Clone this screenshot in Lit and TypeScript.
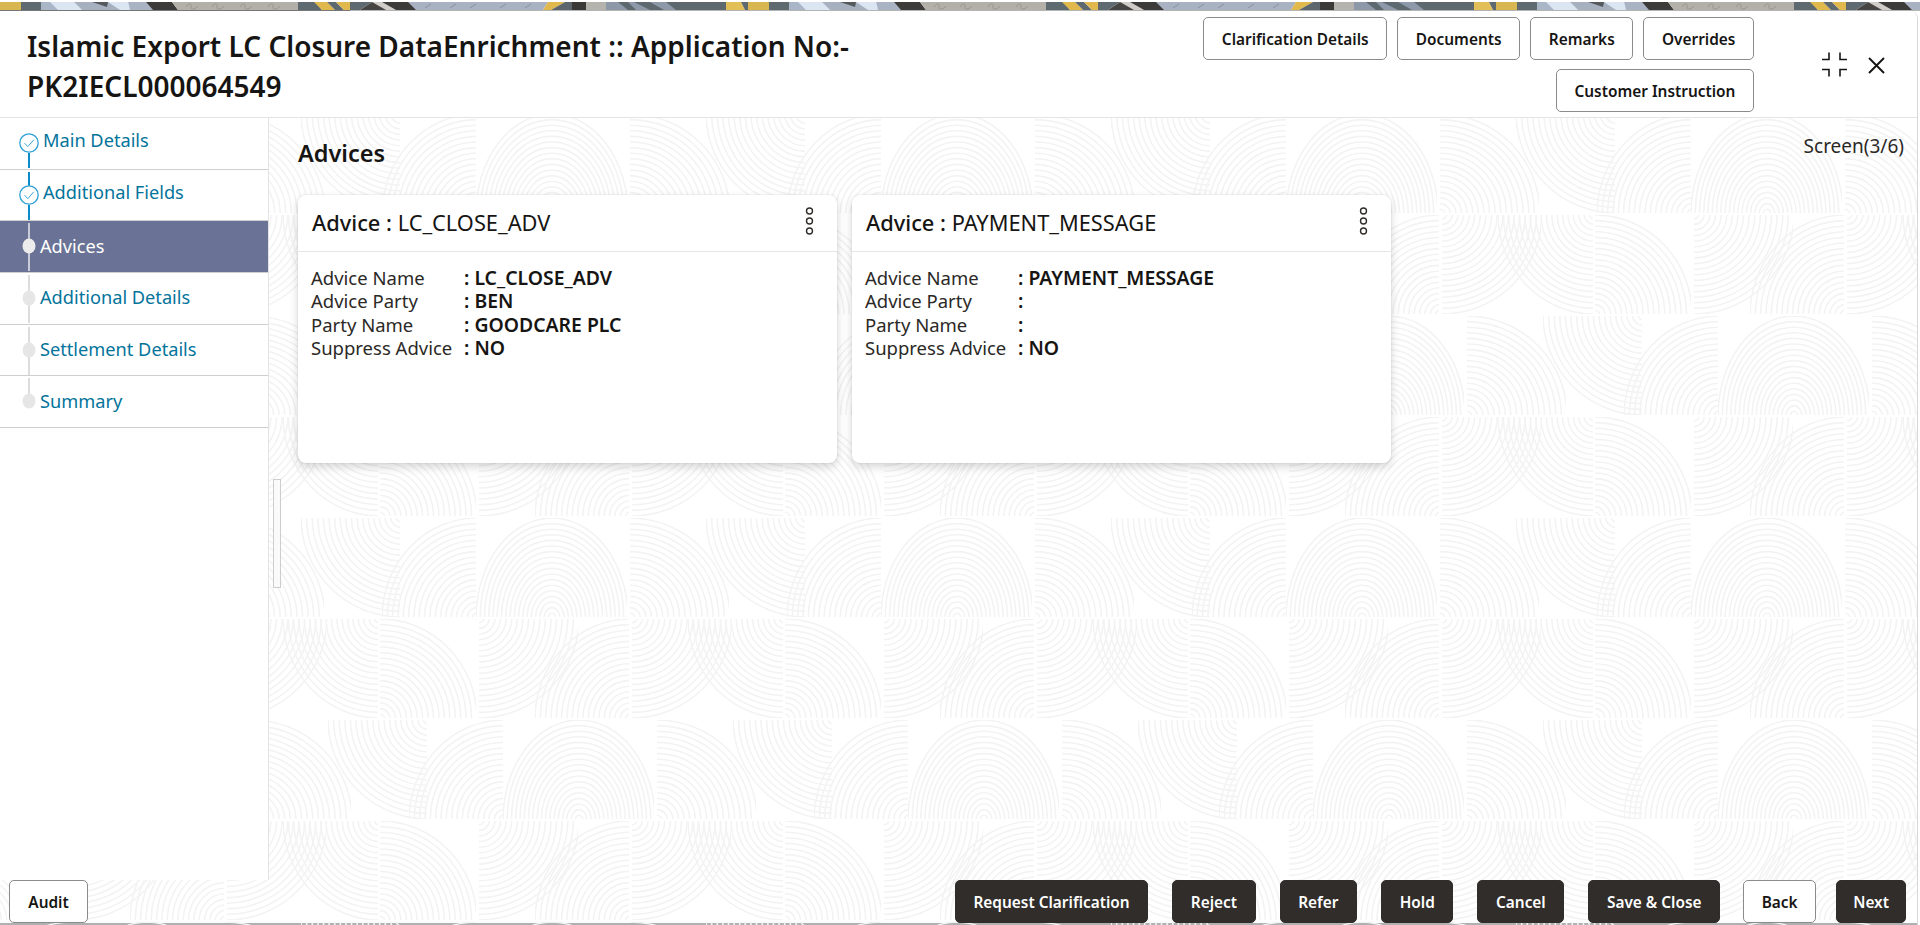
import { LitElement, html, css, svg } from "lit";
import { customElement } from "lit/decorators.js";

const FONT = css`"Noto Sans", "Open Sans", "Liberation Sans", sans-serif`;

type Q = "tl" | "tr" | "bl" | "br" | "t" | "b";
// One family of concentric arcs, clipped to the part of the ring that shows in a row.
function arcGroup(cx: number, cy: number, rx: number, ry: number, q: Q, top: number, bottom: number, id: string) {
  const x0 = q === "tl" || q === "bl" ? cx - rx : q === "t" || q === "b" ? cx - rx : cx;
  const x1 = q === "tr" || q === "br" ? cx + rx : q === "t" || q === "b" ? cx + rx : cx;
  const rings = [];
  for (let f = 1; f > 0.04; f -= 0.056) {
    rings.push(svg`<ellipse cx=${cx} cy=${cy} rx=${rx * f} ry=${ry * f}></ellipse>`);
  }
  return svg`<clipPath id=${id}><rect x=${x0} y=${top + 1} width=${x1 - x0 - 1} height=${bottom - top - 2}></rect></clipPath>
    <g clip-path=${`url(#${id})`}>${rings}</g>`;
}

const TILE_W = 405;
const TILE_H = 404;
function tile() {
  const rowA = (top: number, s: number, tag: string): [number, number, number, number, Q, number, number, string][] => [
    [401 + s, top, 100, 100, "bl", top, top + 101, tag + "a"],
    [72 + s, top + 101, 95, 100, "tl", top, top + 101, tag + "b"],
    [147 + s, top + 101, 76, 100, "t", top, top + 101, tag + "c"],
    [225 + s, top + 101, 100, 100, "tr", top, top + 101, tag + "d"],
  ];
  const rowB = (top: number, s: number, tag: string): [number, number, number, number, Q, number, number, string][] => [
    [380 + s, top + 101, 97, 100, "tr", top, top + 101, tag + "a"],
    [74 + s, top, 100, 100, "br", top, top + 101, tag + "b"],
    [225 + s, top + 101, 95, 100, "tl", top, top + 101, tag + "c"],
    [227 + s, top, 100, 100, "br", top, top + 101, tag + "d"],
    [379 + s, top, 96, 100, "bl", top, top + 101, tag + "e"],
  ];
  const all = [...rowA(0, 0, "p"), ...rowB(101, 0, "q"), ...rowA(202, 27, "r"), ...rowB(303, 0, "s")];
  const out = [];
  for (const [cx, cy, rx, ry, q, t, b, id] of all) {
    for (const dx of [-405, 0, 405]) {
      out.push(arcGroup(cx + dx, cy, rx, ry, q, t, b, `${id}${dx + 405}`));
    }
  }
  return out;
}
const TILE = tile();

const bannerBands: [string, string][] = [
  ["0,0 23,0 21,8 0,8", "#d8b652"],
  ["21,0 43,0 43,8 21,8", "#5f6a70"],
  ["41,0 62,0 70,8 41,8", "#a9b6c7"],
  ["50,0 75,0 58,8 58,8", "#a9b6c7"],
  ["50,0 74,0 82,8 58,8", "#dce6f3"],
  ["74,0 110,0 132,8 82,8", "#a6b0bf"],
  ["92,0 108,0 107,5", "#55595c"],
  ["108,0 128,0 130,8 120,8", "#dce6f3"],
  ["128,0 146,0 155,8 130,8", "#a9b3c4"],
  ["146,0 172,0 178,8 153,8", "#3d3b3a"],
  ["172,0 300,0 300,8 178,8", "#b3b0aa"],
  ["298,0 316,0 322,8 298,8", "#5f6a70"],
  ["314,0 327,0 335,8 322,8", "#e0b84c"],
  ["327,0 336,0 344,8 335,8", "#5f6a70"],
  ["336,0 350,0 350,8 344,8", "#e0b84c"],
  ["350,0 372,0 360,8 350,8", "#5f6a70"],
  ["372,0 376,0 392,8 360,8", "#474543"],
  ["372,0 382,0 396,8 386,8", "#d0cdc8"],
  ["382,0 410,0 418,8 396,8", "#3d3b3a"],
  ["408,0 548,0 543,8 416,8", "#a8b2c2"],
  ["548,0 565,0 551,8 543,8", "#e0b84c"],
  ["565,0 572,0 572,8 551,8", "#5c666c"],
  ["572,0 586,0 586,8 572,8", "#3b3a39"],
  ["586,0 606,0 606,8 586,8", "#b5b3ae"],
  ["606,0 726,0 726,8 606,8", "#8d99a8"],
  ["618,0 628,0 636,8 628,8", "#5e686f"],
  ["634,0 650,0 664,8 650,8", "#5e686f"],
  ["666,0 726,0 726,8 676,8", "#5e686f"],
  ["726,0 741,0 745,8 726,8", "#e3bf58"],
  ["741,0 748,0 748,8 745,8", "#5f6a70"],
];
const slashes = [425, 450, 470, 500, 525];
const squiggles = [186, 212, 240, 268];

@customElement("app-root")
export class AppRoot extends LitElement {
  static styles = css`
    :host {
      display: flex;
      flex-direction: column;
      width: 1920px;
      height: 925px;
      overflow: hidden;
      background: #fff;
      color: #161513;
      font-family: ${FONT};
    }
    .banner {
      display: block;
      flex: none;
      margin-top: 2px;
      width: 1920px;
      height: 8px;
    }
    .rule {
      flex: none;
      height: 1px;
      background: linear-gradient(90deg, #777 0 350px, #b4b4b4 350px);
    }
    .panel {
      flex: 1;
      min-height: 0;
      margin-right: 2px;
      position: relative;
      display: flex;
      flex-direction: column;
      overflow: hidden;
      background: #fff;
      border-top-right-radius: 8px;
      border-right: 1px solid #d8d8d8;
    }
    .paper {
      position: absolute;
      left: 0;
      top: 0;
      width: 100%;
      height: 100%;
    }
    .paper g { fill: none; stroke: #f3f3f3; stroke-width: 1.6; }
    .header {
      position: relative;
      flex: none;
      height: 106px;
      display: flex;
      background: #fff;
      border-bottom: 1px solid #e4e4e4;
    }
    .title {
      flex: 1;
      margin: 0;
      padding: 15px 0 0 27px;
      font-size: 28px;
      line-height: 40px;
      font-weight: 600;
      max-width: 830px;
    }
    .actions {
      margin-left: auto;
      padding-top: 6px;
      display: flex;
      flex-direction: column;
      align-items: flex-end;
      gap: 9px;
    }
    .actions .line { display: flex; gap: 10px; }
    button {
      font-family: inherit;
      font-size: 15.4px;
      font-weight: 600;
      height: 43px;
      box-sizing: border-box;
      padding: 1px 17.6px 0;
      border-radius: 5px;
      cursor: pointer;
      white-space: nowrap;
      color: #161513;
      background: #fff;
      border: 1px solid #8b8b8b;
    }
    button.dark {
      background: #312d2a;
      border-color: #312d2a;
      color: #fff;
    }
    button.audit { min-width: 79px; }
    .win {
      display: flex;
      align-items: flex-start;
      gap: 20px;
      padding: 41px 32px 0 67px;
    }
    .win svg { display: block; fill: none; stroke: #161513; }
    .win .close { margin-top: 5px; }
    .middle {
      position: relative;
      flex: 1;
      min-height: 0;
      display: flex;
    }
    .side {
      width: 269px;
      flex: none;
      box-sizing: border-box;
      background: #fff;
      border-right: 1px solid #e3e3e3;
    }
    .step {
      height: 51.7px;
      box-sizing: border-box;
      display: flex;
      align-items: center;
      border-bottom: 1px solid #cfcfcf;
      font-size: 18.2px;
      color: #04749b;
    }
    .step svg { flex: none; display: block; }
    .step .lbl { padding-bottom: 2px; }
    .step.done .lbl { padding: 0 0 7px 3px; }
    .step.on { background: #6a7396; color: #fff; }
    .content {
      position: relative;
      flex: 1;
      min-width: 0;
      padding: 0 13px 0 29px;
    }
    .grip {
      position: absolute;
      left: 4px;
      top: 361px;
      width: 8px;
      height: 109px;
      box-sizing: border-box;
      border: 1px solid #cdcdcd;
      background: #fafafa;
    }
    .head {
      height: 77px;
      display: flex;
      justify-content: space-between;
    }
    .head h2 {
      margin: 0;
      padding-top: 18px;
      font-size: 23.5px;
      line-height: 34px;
      font-weight: 600;
    }
    .count { padding-top: 15px; font-size: 19px; line-height: 26px; color: #2b2926; }
    .cards { display: flex; gap: 15px; }
    .card {
      width: 539px;
      height: 268px;
      box-sizing: border-box;
      background: #fff;
      border-radius: 8px;
      box-shadow: 0 4px 10px rgba(0, 0, 0, 0.16), 0 0 2px rgba(0, 0, 0, 0.12);
    }
    .card-head {
      height: 57px;
      box-sizing: border-box;
      display: flex;
      align-items: center;
      justify-content: space-between;
      padding: 0 23px 1px 14px;
      border-bottom: 1px solid #e6e6e6;
      font-size: 21.8px;
      font-weight: 400;
    }
    .card-head b { font-weight: 500; }
    .card-head svg { display: block; margin-top: -3px; fill: none; stroke: #312d2a; stroke-width: 1.4; }
    .card-body {
      display: grid;
      grid-template-columns: 153px 1fr;
      padding: 13.5px 13px 0;
      font-size: 18.5px;
      line-height: 23.5px;
      color: #2b2926;
    }
    .card-body b { font-size: 19.4px; font-weight: 600; color: #161513; }
    .footer {
      position: relative;
      flex: none;
      height: 43px;
      display: flex;
      gap: 24px;
      padding: 0 11px 0 9px;
    }
    .footer .gap { margin-left: auto; }
    .footer .back { margin-left: -1px; }
    .footer .tight { margin-left: -4px; padding: 1px 16px 0; }
    .base { flex: none; height: 2px; background: #b0b0b0; }
  `;

  private step(label: string, kind: "done" | "on" | "todo", index: number) {
    const n = 6;
    const lineColor = kind === "done" ? "#0a8ccb" : kind === "on" ? "#c8ccd8" : "#dcdcdc";
    const dotColor = kind === "on" ? "#ececec" : "#e6e6e6";
    const before = index > 0;
    const after = index < n - 1;
    return html`<div class="step ${kind}">
      <svg width="40" height="51" viewBox="0 0 40 51" aria-hidden="true">
        ${before ? svg`<line x1="29" x2="29" y1="2" y2=${kind === "done" ? 16 : 20} stroke=${lineColor} stroke-width="2"></line>` : null}
        ${after ? svg`<line x1="29" x2="29" y1=${kind === "done" ? 35 : 30} y2="50" stroke=${lineColor} stroke-width="2"></line>` : null}
        ${kind === "done"
          ? svg`<circle cx="29" cy="25" r="9.2" fill="#fff" stroke="#2d9fd6" stroke-width="1.3"></circle>
                <path d="M24.5 25.2 L27.8 28.6 L33.8 21.8" fill="none" stroke="#3aa5da" stroke-width="1"></path>`
          : svg`<ellipse cx="29" cy="25" rx="6.5" ry="7.5" fill=${dotColor}></ellipse>`}
      </svg>
      <span class="lbl">${label}</span>
    </div>`;
  }

  private card(name: string, party: string, partyName: string) {
    return html`<section class="card">
      <div class="card-head">
        <span><b>Advice :</b> ${name}</span>
        <svg width="9" height="28" viewBox="0 0 9 28" aria-hidden="true">
          <circle cx="4.5" cy="4" r="3"></circle>
          <circle cx="4.5" cy="14" r="3"></circle>
          <circle cx="4.5" cy="24" r="3"></circle>
        </svg>
      </div>
      <div class="card-body">
        <span>Advice Name</span><b>: ${name}</b>
        <span>Advice Party</span><b>: ${party}</b>
        <span>Party Name</span><b>: ${partyName}</b>
        <span>Suppress Advice</span><b>: NO</b>
      </div>
    </section>`;
  }

  render() {
    return html`
      <svg class="banner" viewBox="0 0 1920 8" aria-hidden="true">
        <defs>
          <pattern id="band" width="748" height="8" patternUnits="userSpaceOnUse">
            ${bannerBands.map(([p, c]) => svg`<polygon points=${p} fill=${c}></polygon>`)}
            ${slashes.map(x => svg`<path d="M${x} 6 l6 -4" stroke="#7f8894" stroke-width="0.8" fill="none"></path>`)}
            ${squiggles.map(x => svg`<path d="M${x} 5 c3 -5 6 -3 5 0 s4 3 7 -1" stroke="#93908b" stroke-width="0.9" fill="none"></path>`)}
          </pattern>
        </defs>
        <rect width="1920" height="8" fill="url(#band)"></rect>
      </svg>
      <div class="rule"></div>
      <div class="panel">
        <svg class="paper" aria-hidden="true">
          <defs>
            <pattern id="rings" width=${TILE_W} height=${TILE_H} patternUnits="userSpaceOnUse" patternTransform="translate(0 102)">
              ${TILE}
            </pattern>
          </defs>
          <rect width="100%" height="100%" fill="url(#rings)"></rect>
        </svg>
        <header class="header">
          <h1 class="title">Islamic Export LC Closure DataEnrichment :: Application No:- PK2IECL000064549</h1>
          <div class="actions">
            <div class="line">
              <button>Clarification Details</button>
              <button>Documents</button>
              <button>Remarks</button>
              <button>Overrides</button>
            </div>
            <button>Customer Instruction</button>
          </div>
          <div class="win">
            <svg width="27" height="25" viewBox="0 0 27 25" stroke-width="1.6" aria-hidden="true">
              <path d="M1 7.5 H8 V0.5"></path>
              <path d="M26 7.5 H19 V0.5"></path>
              <path d="M1 17.5 H8 V24.5"></path>
              <path d="M26 17.5 H19 V24.5"></path>
            </svg>
            <svg class="close" width="17" height="17" viewBox="0 0 17 17" stroke-width="1.9" aria-hidden="true">
              <path d="M1 1 L16 16 M16 1 L1 16"></path>
            </svg>
          </div>
        </header>
        <div class="middle">
          <nav class="side">
            ${this.step("Main Details", "done", 0)}
            ${this.step("Additional Fields", "done", 1)}
            ${this.step("Advices", "on", 2)}
            ${this.step("Additional Details", "todo", 3)}
            ${this.step("Settlement Details", "todo", 4)}
            ${this.step("Summary", "todo", 5)}
          </nav>
          <main class="content">
            <div class="grip"></div>
            <div class="head">
              <h2>Advices</h2>
              <span class="count">Screen(3/6)</span>
            </div>
            <div class="cards">
              ${this.card("LC_CLOSE_ADV", "BEN", "GOODCARE PLC")}
              ${this.card("PAYMENT_MESSAGE", "", "")}
            </div>
          </main>
        </div>
        <footer class="footer">
          <button class="audit">Audit</button>
          <button class="dark gap">Request Clarification</button>
          <button class="dark">Reject</button>
          <button class="dark">Refer</button>
          <button class="dark">Hold</button>
          <button class="dark">Cancel</button>
          <button class="dark">Save &amp; Close</button>
          <button class="back">Back</button>
          <button class="dark tight">Next</button>
        </footer>
        <div class="base"></div>
      </div>
    `;
  }
}
